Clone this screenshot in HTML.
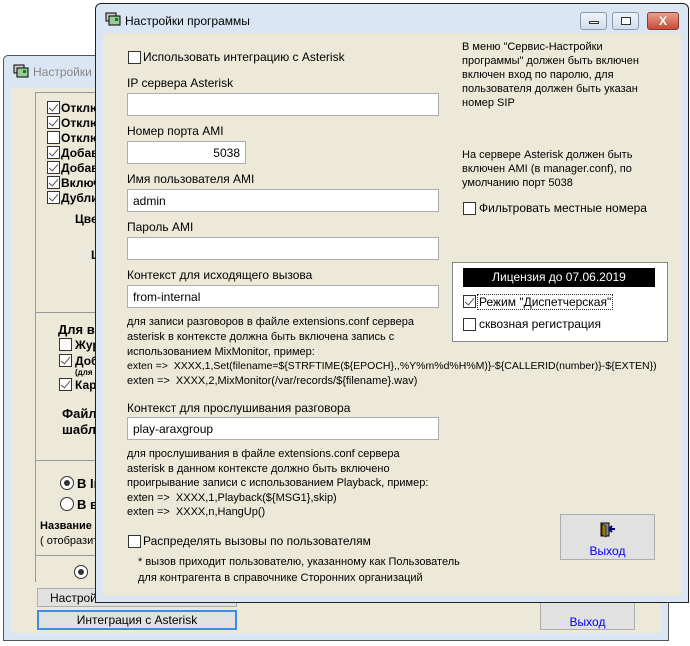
<!DOCTYPE html><html><head><meta charset="utf-8"><style>
*{margin:0;padding:0;box-sizing:border-box}
body{width:690px;height:646px;background:#fff;position:relative;overflow:hidden;font-family:"Liberation Sans",sans-serif;font-size:12px;color:#000}
.a{position:absolute;white-space:nowrap}
.cb{position:absolute;width:13px;height:13px;border:1px solid #333;background:#fff}
.cb.c::after{content:"";position:absolute;left:3px;top:0px;width:4px;height:8px;border:solid #555;border-width:0 1px 1px 0;transform:rotate(40deg)}
.in{position:absolute;background:#fff;border:1px solid #abadb3;height:23px;padding:4px 5px;font-size:12px}
.s{font-size:11px}
.b{font-weight:bold}
.ic{position:absolute;width:16px;height:14px}
</style></head><body>
<!-- back window -->
<div class="a" style="left:3px;top:55px;width:666px;height:586px;border:1px solid #555;background:#dbe6f4;border-radius:5px 5px 0 0"></div>
<div class="a" style="left:11px;top:88px;width:650px;height:545px;background:#ece9d8"></div>
<svg class="ic" style="left:13px;top:64px" viewBox="0 0 16 14"><rect x="1" y="1" width="10" height="8" fill="#ccc" stroke="#000"/><rect x="4" y="4" width="11" height="9" fill="#9c9" stroke="#000"/><rect x="10" y="6" width="3" height="3" fill="#080"/></svg>
<div class="a" style="left:33px;top:65px;font-size:12px;color:#888">Настройки программы</div>
<div class="a" style="left:35px;top:92px;width:70px;height:490px;border-left:1px solid #999;border-top:1px solid #999"></div>
<div class="a" style="left:35px;top:312px;width:70px;border-top:1px solid #999"></div>
<div class="a" style="left:35px;top:460px;width:70px;border-top:1px solid #999"></div>
<div class="a" style="left:35px;top:555px;width:70px;border-top:1px solid #999"></div>
<div class="cb c" style="left:47px;top:101px"></div><div class="a b" style="left:61px;top:101px">Отключить</div>
<div class="cb c" style="left:47px;top:116px"></div><div class="a b" style="left:61px;top:116px">Отключить</div>
<div class="cb" style="left:47px;top:131px"></div><div class="a b" style="left:61px;top:131px">Отключить</div>
<div class="cb c" style="left:47px;top:146px"></div><div class="a b" style="left:61px;top:146px">Добавить</div>
<div class="cb c" style="left:47px;top:161px"></div><div class="a b" style="left:61px;top:161px">Добавить</div>
<div class="cb c" style="left:47px;top:176px"></div><div class="a b" style="left:61px;top:176px">Включить</div>
<div class="cb c" style="left:47px;top:191px"></div><div class="a b" style="left:61px;top:191px">Дублировать</div>
<div class="a b" style="left:75px;top:212px">Цвет</div>
<div class="a b" style="left:91px;top:248px">L</div>
<div class="a b" style="left:58px;top:322px;font-size:13px">Для вызова</div>
<div class="cb" style="left:59px;top:338px"></div><div class="a b" style="left:75px;top:338px">Журнал</div>
<div class="cb c" style="left:59px;top:354px"></div><div class="a b" style="left:75px;top:354px">Добавить</div>
<div class="a b" style="left:75px;top:368px;font-size:8px">(для</div>
<div class="cb c" style="left:59px;top:378px"></div><div class="a b" style="left:75px;top:378px">Карточка</div>
<div class="a b" style="left:62px;top:406px;font-size:13px">Файлы</div>
<div class="a b" style="left:62px;top:422px;font-size:13px">шаблон</div>
<div class="a" style="left:60px;top:476px;width:14px;height:14px;border:1px solid #333;border-radius:50%;background:#fff"><div style="margin:3px;width:6px;height:6px;border-radius:50%;background:#333"></div></div><div class="a b" style="left:77px;top:476px;font-size:13px">В Int</div>
<div class="a" style="left:60px;top:497px;width:14px;height:14px;border:1px solid #333;border-radius:50%;background:#fff"></div><div class="a b" style="left:77px;top:497px;font-size:13px">В вы</div>
<div class="a b" style="left:40px;top:520px;font-size:11px">Название</div>
<div class="a" style="left:40px;top:535px;font-size:11px">( отобразить</div>
<div class="a" style="left:74px;top:565px;width:14px;height:14px;border:1px solid #333;border-radius:50%;background:#fff"><div style="margin:3px;width:6px;height:6px;border-radius:50%;background:#333"></div></div>
<div class="a" style="left:37px;top:588px;width:200px;height:19px;background:#e1e1e1;border:1px solid #adadad;padding:2px 0 0 12px;font-size:12px">Настройки</div>
<div class="a" style="left:37px;top:610px;width:200px;height:20px;background:#e1e1e1;border:2px solid #3c8ce0;text-align:center;padding-top:1px">Интеграция с Asterisk</div>
<div class="a" style="left:540px;top:598px;width:95px;height:32px;background:#e1e1e1;border:1px solid #adadad;text-align:center;color:#00f;padding-top:16px;font-size:12px;line-height:14px">Выход</div>
<!-- front window -->
<div class="a" style="left:95px;top:3px;width:594px;height:600px;border:1px solid #222;background:#dbe6f4;border-radius:6px 6px 0 0"></div>
<div class="a" style="left:103px;top:33px;width:578px;height:563px;background:#ece9d8"></div>
<svg class="ic" style="left:105px;top:12px" viewBox="0 0 16 14"><rect x="1" y="1" width="10" height="8" fill="#ccc" stroke="#000"/><rect x="4" y="4" width="11" height="9" fill="#9c9" stroke="#000"/><rect x="10" y="6" width="3" height="3" fill="#080"/></svg>
<div class="a" style="left:125px;top:14px;font-size:12px">Настройки программы</div>
<div class="a" style="left:580px;top:12px;width:27px;height:18px;border:1px solid #8a9ab0;border-radius:3px;background:linear-gradient(#eef3fa,#d3deec)"><div style="position:absolute;left:8px;top:8px;width:10px;height:3px;border:1px solid #333;background:#fff"></div></div>
<div class="a" style="left:612px;top:12px;width:27px;height:18px;border:1px solid #8a9ab0;border-radius:3px;background:linear-gradient(#eef3fa,#d3deec)"><div style="position:absolute;left:8px;top:4px;width:10px;height:8px;border:1px solid #333;background:#fff"></div></div>
<div class="a" style="left:647px;top:12px;width:32px;height:18px;border:1px solid #8a3a2a;border-radius:3px;background:linear-gradient(#e8a090,#c74a35);color:#fff;font-weight:bold;text-align:center;font-size:12px;line-height:16px">X</div>
<div class="cb" style="left:128px;top:51px"></div><div class="a" style="left:143px;top:50px">Использовать интеграцию с Asterisk</div>
<div class="a" style="left:127px;top:76px">IP сервера Asterisk</div>
<div class="in" style="left:127px;top:93px;width:312px"></div>
<div class="a" style="left:127px;top:124px">Номер порта AMI</div>
<div class="in" style="left:127px;top:141px;width:119px;text-align:right">5038</div>
<div class="a" style="left:127px;top:172px">Имя пользователя AMI</div>
<div class="in" style="left:127px;top:189px;width:312px">admin</div>
<div class="a" style="left:127px;top:220px">Пароль AMI</div>
<div class="in" style="left:127px;top:237px;width:312px"></div>
<div class="a" style="left:127px;top:268px">Контекст для исходящего вызова</div>
<div class="in" style="left:127px;top:285px;width:312px">from-internal</div>
<div class="a s" style="left:127px;top:315px;line-height:15px">для записи разговоров в файле extensions.conf сервера<br>asterisk в контексте должна быть включена запись с<br>использованием MixMonitor, пример:</div>
<div class="a s" style="left:127px;top:360px;font-size:10.5px">exten =&gt;&nbsp; XXXX,1,Set(filename=${STRFTIME(${EPOCH},,%Y%m%d%H%M)}-${CALLERID(number)}-${EXTEN})</div>
<div class="a s" style="left:127px;top:375px">exten =&gt;&nbsp; XXXX,2,MixMonitor(/var/records/${filename}.wav)</div>
<div class="a" style="left:127px;top:401px">Контекст для прослушивания разговора</div>
<div class="in" style="left:127px;top:417px;width:312px">play-araxgroup</div>
<div class="a s" style="left:127px;top:447px;line-height:14.5px">для прослушивания в файле extensions.conf сервера<br>asterisk в данном контексте должно быть включено<br>проигрывание записи с использованием Playback, пример:<br>exten =&gt;&nbsp; XXXX,1,Playback(${MSG1},skip)<br>exten =&gt;&nbsp; XXXX,n,HangUp()</div>
<div class="cb" style="left:128px;top:535px"></div><div class="a" style="left:143px;top:534px">Распределять вызовы по пользователям</div>
<div class="a s" style="left:138px;top:554px;line-height:16px">* вызов приходит пользователю, указанному как Пользователь<br>для контрагента в справочнике Сторонних организаций</div>
<div class="a s" style="left:462px;top:40px;line-height:14px">В меню "Сервис-Настройки<br>программы" должен быть включен<br>включен вход по паролю, для<br>пользователя должен быть указан<br>номер SIP</div>
<div class="a s" style="left:462px;top:148px;line-height:14px">На сервере Asterisk должен быть<br>включен AMI (в manager.conf), по<br>умолчанию порт 5038</div>
<div class="cb" style="left:463px;top:202px"></div><div class="a" style="left:479px;top:201px">Фильтровать местные номера</div>
<div class="a" style="left:452px;top:262px;width:216px;height:80px;border:1px solid #888;background:#fff"></div>
<div class="a" style="left:463px;top:268px;width:192px;height:19px;background:#000;color:#fff;text-align:center;padding-top:2px">Лицензия до 07.06.2019</div>
<div class="cb c" style="left:463px;top:295px"></div><div class="a" style="left:477px;top:294px;border:1px dotted #333;padding:0 1px">Режим "Диспетчерская"</div>
<div class="cb" style="left:463px;top:318px"></div><div class="a" style="left:479px;top:317px">сквозная регистрация</div>
<div class="a" style="left:560px;top:514px;width:95px;height:46px;background:#e1e1e1;border:1px solid #adadad"></div>
<svg class="a" style="left:600px;top:522px" width="16" height="16" viewBox="0 0 16 16"><rect x="1" y="1" width="8" height="13" fill="#888" stroke="#000"/><path d="M2 2 L6 4 L6 15 L2 13Z" fill="#997a00" stroke="#000" stroke-width=".6"/><path d="M9 7 H15 M9 7 L12 4 M9 7 L12 10" stroke="#000080" stroke-width="2" fill="none"/></svg>
<div class="a" style="left:560px;top:544px;width:95px;text-align:center;color:#00f">Выход</div>
</body></html>
